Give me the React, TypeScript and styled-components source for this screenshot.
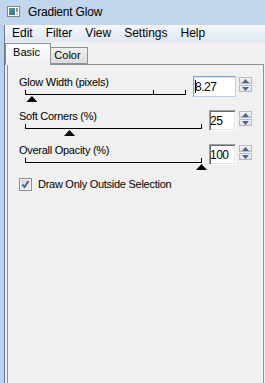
import styled, { createGlobalStyle } from "styled-components";

const uiFont = `"Liberation Sans", Arial, sans-serif`;

const GlobalStyle = createGlobalStyle`
	html, body {
		margin: 0;
		padding: 0;
		background: #f0f0f0;
	}
	* {
		box-sizing: border-box;
	}
`;

const menuItems = ["Edit", "Filter", "View", "Settings", "Help"];

interface ISlider {
	label: string;
	value: string;
	fraction: number;
	ticks: number[];
	boxWidth: number;
	focused?: boolean;
}

const sliders: ISlider[] = [
	{ label: "Glow Width (pixels)", value: "8.27", fraction: 0.04, ticks: [0, 0.8, 1], boxWidth: 43, focused: true },
	{ label: "Soft Corners (%)", value: "25", fraction: 0.25, ticks: [0, 1], boxWidth: 27 },
	{ label: "Overall Opacity (%)", value: "100", fraction: 1, ticks: [0, 1], boxWidth: 27 },
];

const AppIcon = () => (
	<svg width="13" height="12" viewBox="0 0 13 12">
		<defs>
			<linearGradient id="iconFill" x1="0" y1="0" x2="1" y2="1">
				<stop offset="0" stopColor="#5fa07a" />
				<stop offset="1" stopColor="#2f6fb0" />
			</linearGradient>
		</defs>
		<rect x="0.5" y="0.5" width="12" height="10" fill="#ffffff" stroke="#7b8594" />
		<rect x="2" y="2" width="6" height="7" fill="url(#iconFill)" />
		<rect x="9.5" y="2" width="1" height="4" fill="#222" />
		<rect x="9.5" y="7.5" width="1" height="1" fill="#222" />
	</svg>
);

const CheckMark = () => (
	<svg width="11" height="11" viewBox="0 0 11 11">
		<path d="M2.5 5.5 L4.5 8 L8.5 2" fill="none" stroke="#3f5aa0" strokeWidth="1.8" />
	</svg>
);

const SpinArrow = ({ up }: { up?: boolean }) => (
	<svg width="7" height="4" viewBox="0 0 7 4">
		<polygon points={up ? "3.5,0 7,4 0,4" : "0,0 7,0 3.5,4"} fill="#4a6496" />
	</svg>
);

const App = () => {
	return (
		<Screen>
			<GlobalStyle />
			<TitleBar>
				<IconBox>
					<AppIcon />
				</IconBox>
				<Title>Gradient Glow</Title>
			</TitleBar>
			<Body>
				<Frame />
				<Client>
					<MenuBar>
						{menuItems.map((item) => (
							<MenuItem key={item}>{item}</MenuItem>
						))}
					</MenuBar>
					<TabStrip>
						<Tab active tabWidth={46}>
							Basic
						</Tab>
						<Tab tabWidth={38}>Color</Tab>
					</TabStrip>
					<Panel>
						{sliders.map((s) => (
							<SliderRow key={s.label}>
								<SliderColumn>
									<Label>{s.label}</Label>
									<Track>
										<TrackLine />
										{s.ticks.map((t) => (
											<Tick key={t} style={{ left: `calc(${t} * (100% - 1px))` }} />
										))}
										<Thumb style={{ left: `calc(${s.fraction} * (100% - 1px) - 5px)` }} />
									</Track>
								</SliderColumn>
								<ValueBox boxWidth={s.boxWidth} focused={s.focused}>
									{s.focused && <Caret />}
									{s.value}
								</ValueBox>
								<Spin>
									<SpinButton>
										<SpinArrow up />
									</SpinButton>
									<SpinButton>
										<SpinArrow />
									</SpinButton>
								</Spin>
							</SliderRow>
						))}
						<CheckRow>
							<CheckBox>
								<CheckMark />
							</CheckBox>
							<Label>Draw Only Outside Selection</Label>
						</CheckRow>
					</Panel>
				</Client>
			</Body>
		</Screen>
	);
};

const Screen = styled.div`
	width: 265px;
	height: 383px;
	overflow: hidden;
	display: flex;
	flex-direction: column;
	font-family: ${uiFont};
	color: #000;
	background: #c1d5ec;
`;

const TitleBar = styled.div`
	height: 25px;
	flex-shrink: 0;
	display: flex;
	align-items: flex-start;
	padding: 5px 0 0 7px;
	background: #c1d5ec;
`;

const IconBox = styled.div`
	display: flex;
	margin-top: 1px;
`;

const Title = styled.div`
	margin-left: 8px;
	font-size: 12px;
	line-height: 14px;
	letter-spacing: -0.2px;
`;

const Body = styled.div`
	flex: 1;
	display: flex;
	min-height: 0;
`;

const Frame = styled.div`
	width: 5px;
	flex-shrink: 0;
	background: #bad2ec;
	border-right: 1px solid #667792;
`;

const Client = styled.div`
	flex: 1;
	display: flex;
	flex-direction: column;
	background: #f0f0f0;
`;

const MenuBar = styled.div`
	height: 17px;
	display: flex;
	gap: 13px;
	padding-left: 7px;
	background: linear-gradient(to bottom, #f6f8fc, #dfe7f3);
`;

const MenuItem = styled.span`
	font-size: 12px;
	line-height: 17px;
`;

const TabStrip = styled.div`
	height: 21px;
	margin-top: 1px;
	display: flex;
	align-items: flex-end;
	position: relative;
	z-index: 1;
`;

interface ITab {
	active?: boolean;
	tabWidth: number;
}

const Tab = styled.div<ITab>`
	width: ${(p) => p.tabWidth}px;
	height: ${(p) => (p.active ? 22 : 17)}px;
	margin-bottom: ${(p) => (p.active ? -1 : 0)}px;
	margin-left: ${(p) => (p.active ? 0 : -1)}px;
	border: 1px solid #8d9097;
	border-bottom: ${(p) => (p.active ? "none" : "1px solid #8d9097")};
	background: ${(p) =>
		p.active ? "linear-gradient(to bottom, #fdfdfd, #f0f0f0)" : "linear-gradient(to bottom, #f1f1f1, #dcdcdc)"};
	position: relative;
	z-index: ${(p) => (p.active ? 2 : 1)};
	font-size: 11px;
	line-height: ${(p) => (p.active ? 16 : 14)}px;
	text-align: center;
	padding-right: 3px;
`;

const Panel = styled.div`
	flex: 1;
	margin: 0 1px 0 2px;
	border: 1px solid #8d9097;
	border-bottom: none;
	background: #f0f0f0;
	padding: 11px 11px 0 11px;
	display: flex;
	flex-direction: column;
`;

const SliderRow = styled.div`
	height: 34px;
	display: flex;
	align-items: flex-start;
`;

const SliderColumn = styled.div`
	flex: 1;
	display: flex;
	flex-direction: column;
	margin-right: 7px;
`;

const Label = styled.div`
	font-size: 11px;
	line-height: 13px;
	letter-spacing: -0.27px;
	white-space: nowrap;
`;

const Track = styled.div`
	position: relative;
	height: 11px;
	margin: 1px 0 0 6px;
`;

const TrackLine = styled.div`
	margin-top: 4px;
	height: 1px;
	background: #000;
`;

const Tick = styled.div`
	position: absolute;
	top: 0;
	width: 1px;
	height: 5px;
	background: #000;
`;

const Thumb = styled.div`
	position: absolute;
	top: 6px;
	width: 11px;
	height: 6px;
	background: #000;
	clip-path: polygon(50% 0, 100% 100%, 0 100%);
`;

interface IValueBox {
	boxWidth: number;
	focused?: boolean;
}

const ValueBox = styled.div<IValueBox>`
	width: ${(p) => p.boxWidth}px;
	height: 21px;
	display: flex;
	align-items: center;
	background: #fff;
	font-size: 12px;
	letter-spacing: -0.5px;
	padding-left: ${(p) => (p.focused ? 1 : 0)}px;
	border: 1px solid;
	border-color: ${(p) => (p.focused ? "#7ea6d4 #b9d0ea #b9d0ea #7ea6d4" : "#a0a0a0 #ffffff #ffffff #a0a0a0")};
	box-shadow: ${(p) =>
		p.focused ? "inset 1px 1px 0 #dbe7f4" : "inset 1px 1px 0 #6a6a6a, inset -1px -1px 0 #e3e3e3"};
`;

const Caret = styled.span`
	width: 1px;
	height: 13px;
	background: #000;
	margin-right: -1px;
`;

const Spin = styled.div`
	margin: 1px 0 0 3px;
	display: flex;
	flex-direction: column;
	gap: 1px;
`;

const SpinButton = styled.div`
	width: 13px;
	height: 7px;
	display: flex;
	align-items: center;
	justify-content: center;
	border: 1px solid #b4b9c2;
	background: linear-gradient(to bottom, #f4f4f4, #dedede);
`;

const CheckRow = styled.div`
	display: flex;
	align-items: flex-start;
	gap: 6px;
`;

const CheckBox = styled.div`
	width: 13px;
	height: 13px;
	display: flex;
	align-items: center;
	justify-content: center;
	border: 1px solid #8f8f8f;
	background: linear-gradient(135deg, #d2d2d2, #f2f2f2);
	box-shadow: inset 0 0 0 1px #f4f4f4;
`;

export default App;
